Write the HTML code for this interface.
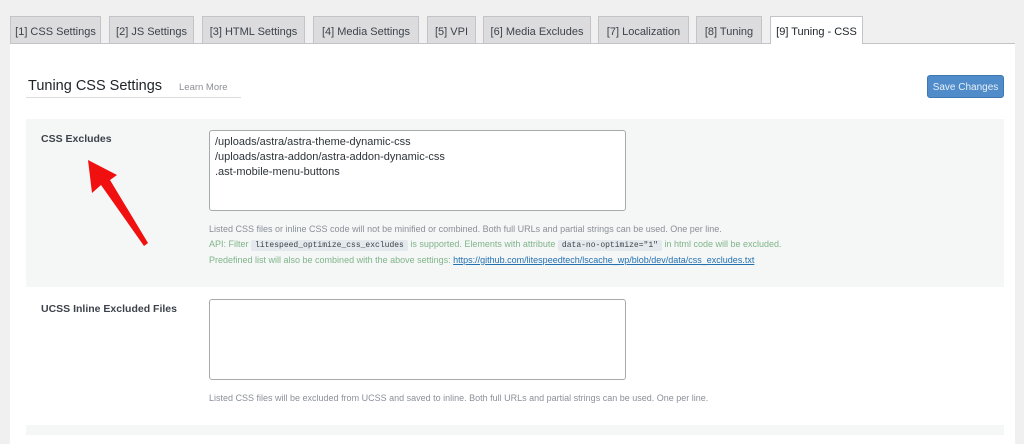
<!DOCTYPE html>
<html><head><style>
body{margin:0;width:1024px;height:431px;background:#f0f0f1;font-family:"Liberation Sans",sans-serif;position:relative;overflow:hidden;color:#1d2327}
.tab{position:absolute;top:16px;height:27px;background:#dcdcde;border:1px solid #c3c4c7;border-bottom:none;font-size:11px;line-height:30px;text-align:center;color:#3c434a;box-sizing:border-box}
.tab.on{background:#fff;color:#1d2327;height:28px;z-index:2}
#panel{position:absolute;left:10px;top:43px;width:1005px;height:400px;background:#fff;border-top:1px solid #c3c4c7}
.a{position:absolute}
.ta{position:absolute;border:1px solid #a7aaad;border-radius:3px;background:#fff;box-sizing:border-box}
.desc{font-size:9px;color:#8a9099;position:absolute;white-space:nowrap}
.g{color:#7fb58a}
code{background:#e4e9ee;color:#3c434a;font-family:"Liberation Mono",monospace;font-size:8px;padding:1px 4px;border-radius:2px}
</style></head><body>
<div class="tab" style="left:10px;width:91px">[1] CSS Settings</div>
<div class="tab" style="left:109px;width:85px">[2] JS Settings</div>
<div class="tab" style="left:202px;width:103px">[3] HTML Settings</div>
<div class="tab" style="left:313px;width:106px">[4] Media Settings</div>
<div class="tab" style="left:427px;width:49px">[5] VPI</div>
<div class="tab" style="left:483px;width:108px">[6] Media Excludes</div>
<div class="tab" style="left:598px;width:91px">[7] Localization</div>
<div class="tab" style="left:696px;width:66px">[8] Tuning</div>
<div class="tab on" style="left:770px;width:93px">[9] Tuning - CSS</div>
<div id="panel"></div>
<div class="a" style="left:28px;top:78px;font-size:14.5px">Tuning CSS Settings</div>
<div class="a" style="left:179px;top:82px;font-size:9.5px;color:#8c8f94">Learn More</div>
<div class="a" style="left:26px;top:97px;width:215px;height:1px;background:#dcdcde"></div>
<div class="a" style="left:927px;top:75px;width:77px;height:23px;background:#4f8cc9;border:1px solid #3f78b0;border-radius:3px;box-sizing:border-box;color:#e8f0f8;font-size:10px;line-height:23px;text-align:center">Save Changes</div>
<div class="a" style="left:26px;top:119px;width:978px;height:168px;background:#f5f6f6"></div>
<div class="a" style="left:41px;top:133px;font-size:10.5px;font-weight:bold;color:#3c434a">CSS Excludes</div>
<div class="ta" style="left:209px;top:130px;width:417px;height:81px;font-size:11px;line-height:15px;padding:4px 5px;color:#2c3338">/uploads/astra/astra-theme-dynamic-css<br>/uploads/astra-addon/astra-addon-dynamic-css<br>.ast-mobile-menu-buttons</div>
<div class="desc" style="left:209px;top:224px">Listed CSS files or inline CSS code will not be minified or combined. Both full URLs and partial strings can be used. One per line.</div>
<div class="desc g" style="left:209px;top:239px">API: Filter <code>litespeed_optimize_css_excludes</code> is supported. Elements with attribute <code>data-no-optimize="1"</code> in html code will be excluded.</div>
<div class="desc g" style="left:209px;top:255px">Predefined list will also be combined with the above settings: <span style="color:#2271b1;text-decoration:underline">https://github.com/litespeedtech/lscache_wp/blob/dev/data/css_excludes.txt</span></div>
<div class="a" style="left:41px;top:303px;font-size:10.5px;font-weight:bold;color:#3c434a">UCSS Inline Excluded Files</div>
<div class="ta" style="left:209px;top:299px;width:417px;height:81px"></div>
<div class="desc" style="left:209px;top:393px">Listed CSS files will be excluded from UCSS and saved to inline. Both full URLs and partial strings can be used. One per line.</div>
<div class="a" style="left:26px;top:425px;width:978px;height:10px;background:#f5f6f6"></div>
<svg class="a" style="left:0;top:0" width="300" height="300"><polygon points="88,160 117,175 110,180 148,243 144,246 101,185 92,193" fill="#f01010"/></svg>
</body></html>
